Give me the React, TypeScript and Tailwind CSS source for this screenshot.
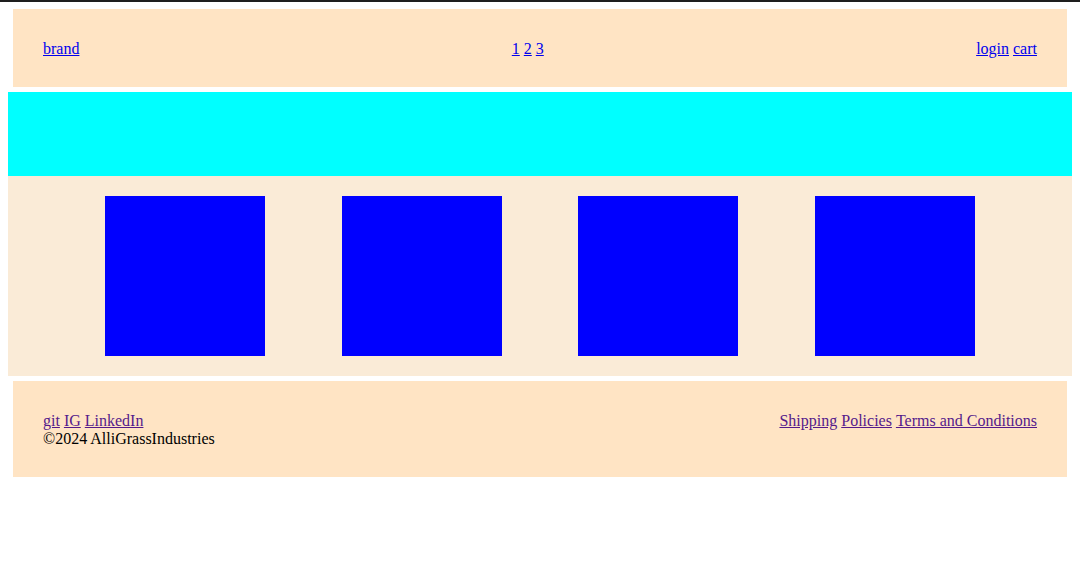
const linkBlue = "text-[#0000ee] underline";
const linkVisited = "text-[#551a8b] underline";

const App = () => {
  return (
    <div className="min-h-[572px] bg-white font-['Liberation_Serif',serif] text-[16px] leading-[18px] text-black">
      <div className="h-[2px] bg-[#1e1e1e]" />
      <div className="px-[8px] pt-[7px]">
        {/* header */}
        <div className="mx-[5px] flex justify-between bg-[#ffe4c4] px-[30px] pb-[29px] pt-[31px]">
          <a href="#" className={linkBlue}>
            brand
          </a>
          <div className="flex gap-[4px]">
            <a href="#" className={linkBlue}>1</a>
            <a href="#" className={linkBlue}>2</a>
            <a href="#" className={linkBlue}>3</a>
          </div>
          <div className="flex gap-[4px]">
            <a href="#" className={linkBlue}>login</a>
            <a href="#" className={linkBlue}>cart</a>
          </div>
        </div>

        {/* banner */}
        <div className="mt-[5px] h-[84px] bg-[#00ffff]" />

        {/* products */}
        <div className="flex justify-between bg-[#faebd7] px-[97px] py-[20px]">
          {[1, 2, 3, 4].map((i) => (
            <div key={i} className="h-[160px] w-[160px] bg-[#0000ff]" />
          ))}
        </div>

        {/* footer */}
        <div className="mx-[5px] mt-[5px] flex justify-between bg-[#ffe4c4] px-[30px] pb-[29px] pt-[31px]">
          <div className="flex flex-col">
            <div className="flex gap-[4px]">
              <a href="#" className={linkVisited}>git</a>
              <a href="#" className={linkVisited}>IG</a>
              <a href="#" className={linkVisited}>LinkedIn</a>
            </div>
            <span>©2024 AlliGrassIndustries</span>
          </div>
          <div className="flex gap-[4px]">
            <a href="#" className={linkVisited}>Shipping</a>
            <a href="#" className={linkVisited}>Policies</a>
            <a href="#" className={linkVisited}>Terms and Conditions</a>
          </div>
        </div>
      </div>
    </div>
  );
};

export default App;
